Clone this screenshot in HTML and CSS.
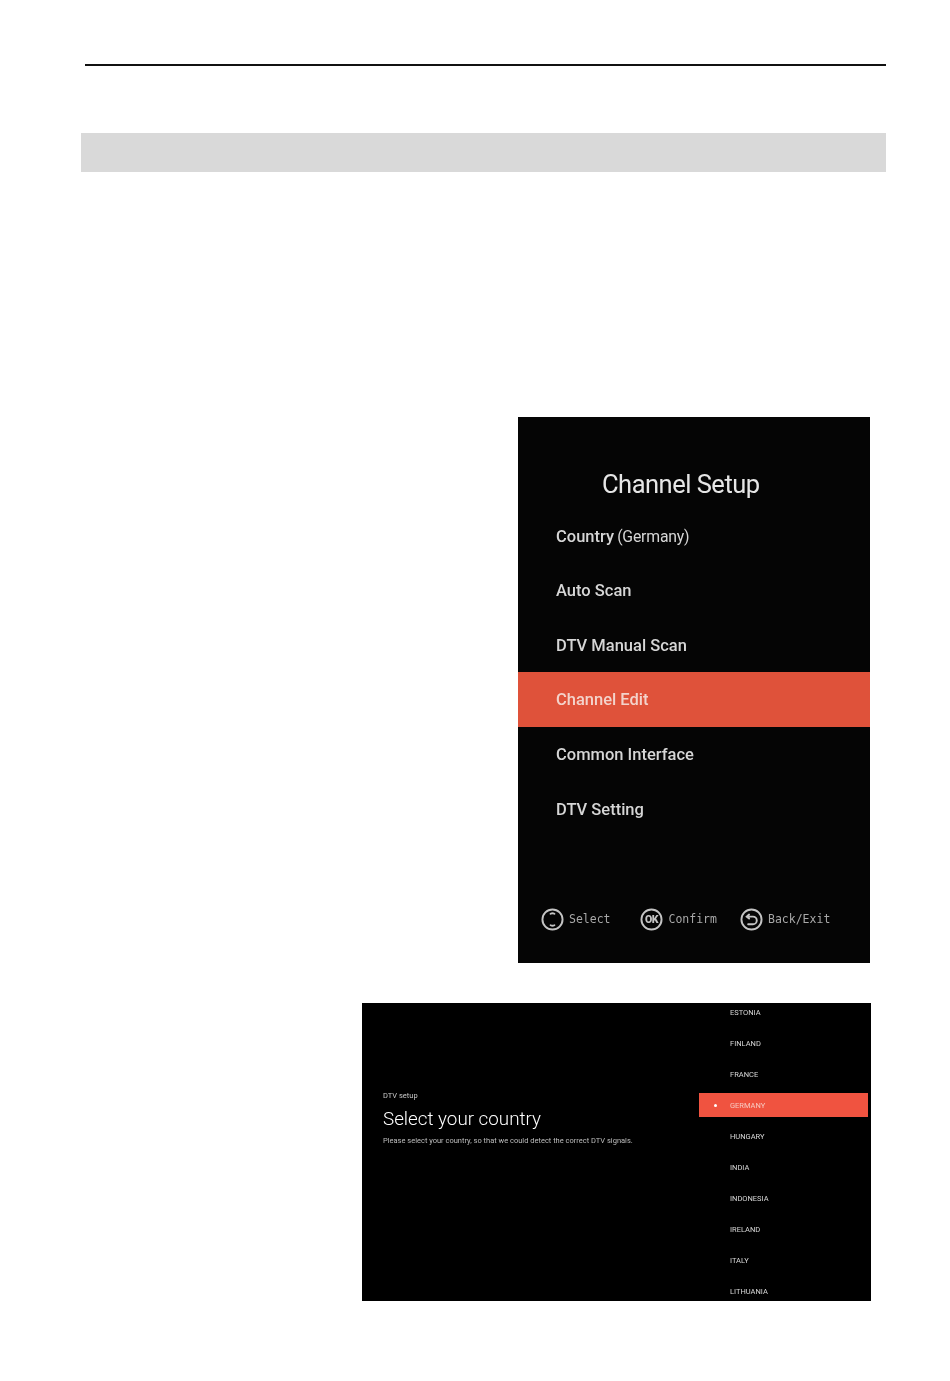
FILE: index.html
```html
<!DOCTYPE html>
<html lang="en">
<head>
    <meta charset="UTF-8">
    <title>Channel Setup</title>
    <link rel="stylesheet" href="styles.css">
</head>
<body>
    <div class="page">
        <div class="top-rule"></div>
        <div class="section-bar"></div>

        <!-- channel setup menu -->
        <div class="menu-screen">
            <h1 class="menu-title">Channel Setup</h1>
            <ul class="menu-list">
                <li>Country <span class="thin">(Germany)</span></li>
                <li>Auto Scan</li>
                <li>DTV Manual Scan</li>
                <li class="active">Channel Edit</li>
                <li>Common Interface</li>
                <li>DTV Setting</li>
            </ul>
            <div class="hints">
                <div class="hint hint-select">
                    <svg class="hint-icon" viewBox="0 0 24 24">
                        <circle cx="12" cy="12" r="10.5"/>
                        <path d="M10 6 Q12 5 14 6 M10 18 Q12 19 14 18"/>
                    </svg>
                    <span>Select</span>
                </div>
                <div class="hint hint-confirm">
                    <svg class="hint-icon" viewBox="0 0 24 24">
                        <circle cx="12" cy="12" r="10.5"/>
                        <text class="ok" x="12" y="15.8" text-anchor="middle">OK</text>
                    </svg>
                    <span>Confirm</span>
                </div>
                <div class="hint hint-back">
                    <svg class="hint-icon" viewBox="0 0 24 24">
                        <circle cx="12" cy="12" r="10.5"/>
                        <path d="M7 9 H13.5 A4 4 0 0 1 13.5 17 H8.5 M9.5 6.8 L7 9 L9.5 11"/>
                    </svg>
                    <span>Back/Exit</span>
                </div>
            </div>
        </div>

        <!-- country selection -->
        <div class="country-screen">
            <div class="country-intro">
                <div class="intro-label">DTV setup</div>
                <h2 class="intro-title">Select your country</h2>
                <p class="intro-text">Please select your country, so that we could detect the correct DTV signals.</p>
            </div>
            <ul class="country-list">
                <li>ESTONIA</li>
                <li>FINLAND</li>
                <li>FRANCE</li>
                <li class="active">GERMANY</li>
                <li>HUNGARY</li>
                <li>INDIA</li>
                <li>INDONESIA</li>
                <li>IRELAND</li>
                <li>ITALY</li>
                <li>LITHUANIA</li>
            </ul>
        </div>
    </div>
</body>
</html>
```

FILE: styles.css
```css
* {
    box-sizing: border-box;
}

html, body {
    margin: 0;
    background: #fff;
}

.page {
    width: 950px;
    height: 1381px;
    padding-top: 64px;
    font-family: Roboto, "Liberation Sans", sans-serif;
    overflow: hidden;
}

.top-rule {
    width: 801px;
    height: 2px;
    margin-left: 85px;
    background: #111;
}

.section-bar {
    width: 805px;
    height: 39px;
    margin: 67px 0 245px 81px;
    background: #d9d9d9;
}

/* channel setup menu */

.menu-screen {
    width: 352px;
    height: 546px;
    margin-left: 518px;
    padding-top: 49px;
    background: #050505;
    color: #e6e6e6;
    display: flex;
    flex-direction: column;
    /* the source is a scanned, slightly soft picture */
    filter: blur(0.45px);
}

.menu-title {
    margin: 0 0 6.6px 84px;
    font-size: 25.5px;
    font-weight: 400;
    line-height: 36px;
    letter-spacing: -0.5px;
    white-space: nowrap;
}

.menu-list {
    list-style: none;
    margin: 0;
    padding: 0;
}

.menu-list li {
    height: 54.6px;
    padding-left: 38px;
    font-size: 16.5px;
    font-weight: 500;
    line-height: 56px;
    color: #d6d6d6;
}

.menu-list .thin {
    font-size: 15.8px;
    font-weight: 400;
    letter-spacing: -0.2px;
    margin-left: -1px;
}

.menu-list .active {
    background: #df523a;
    color: #f3d3cb;
}

.hints {
    display: flex;
    height: 26px;
    margin-top: 70px;
    padding-left: 22.5px;
    font-family: "DejaVu Sans Mono", monospace;
    font-size: 11.5px;
    color: #a8a8a8;
}

.hint {
    display: flex;
    align-items: center;
    gap: 5.5px;
    width: 99.5px;
}

.hint-icon {
    width: 23px;
    height: 23px;
    fill: none;
    stroke: #c4c4c4;
    stroke-width: 2;
    stroke-linecap: round;
    flex: none;
}

.hint-icon .ok {
    fill: #c4c4c4;
    stroke: none;
    font-family: Roboto, sans-serif;
    font-size: 11px;
    font-weight: 900;
    letter-spacing: -0.6px;
}

/* country selection */

.country-screen {
    display: flex;
    width: 509px;
    height: 298px;
    margin: 40px 0 0 362px;
    background: #000;
    color: #fff;
    overflow: hidden;
    filter: blur(0.4px);
}

.country-intro {
    width: 337px;
    padding: 87px 0 0 21px;
}

.intro-label {
    font-size: 7.5px;
    line-height: 12px;
    color: #c8c8c8;
}

.intro-title {
    margin: 5px 0 4px;
    font-size: 18.8px;
    font-weight: 300;
    line-height: 24px;
    white-space: nowrap;
}

.intro-text {
    margin: 0;
    font-size: 7.5px;
    line-height: 12px;
    color: #bdbdbd;
    white-space: nowrap;
}

.country-list {
    list-style: none;
    width: 169px;
    margin: -3px 0 0;
    padding: 0;
    display: flex;
    flex-direction: column;
    gap: 7px;
}

.country-list li {
    position: relative;
    flex: none;
    height: 24px;
    padding-left: 31px;
    font-size: 7.5px;
    line-height: 25px;
    color: #d8d8d8;
}

.country-list .active {
    background: #f05340;
    color: #f7c9c0;
}

.country-list .active::before {
    content: "";
    position: absolute;
    left: 15px;
    top: 11px;
    width: 3px;
    height: 3px;
    border-radius: 50%;
    background: #fff;
}
```
